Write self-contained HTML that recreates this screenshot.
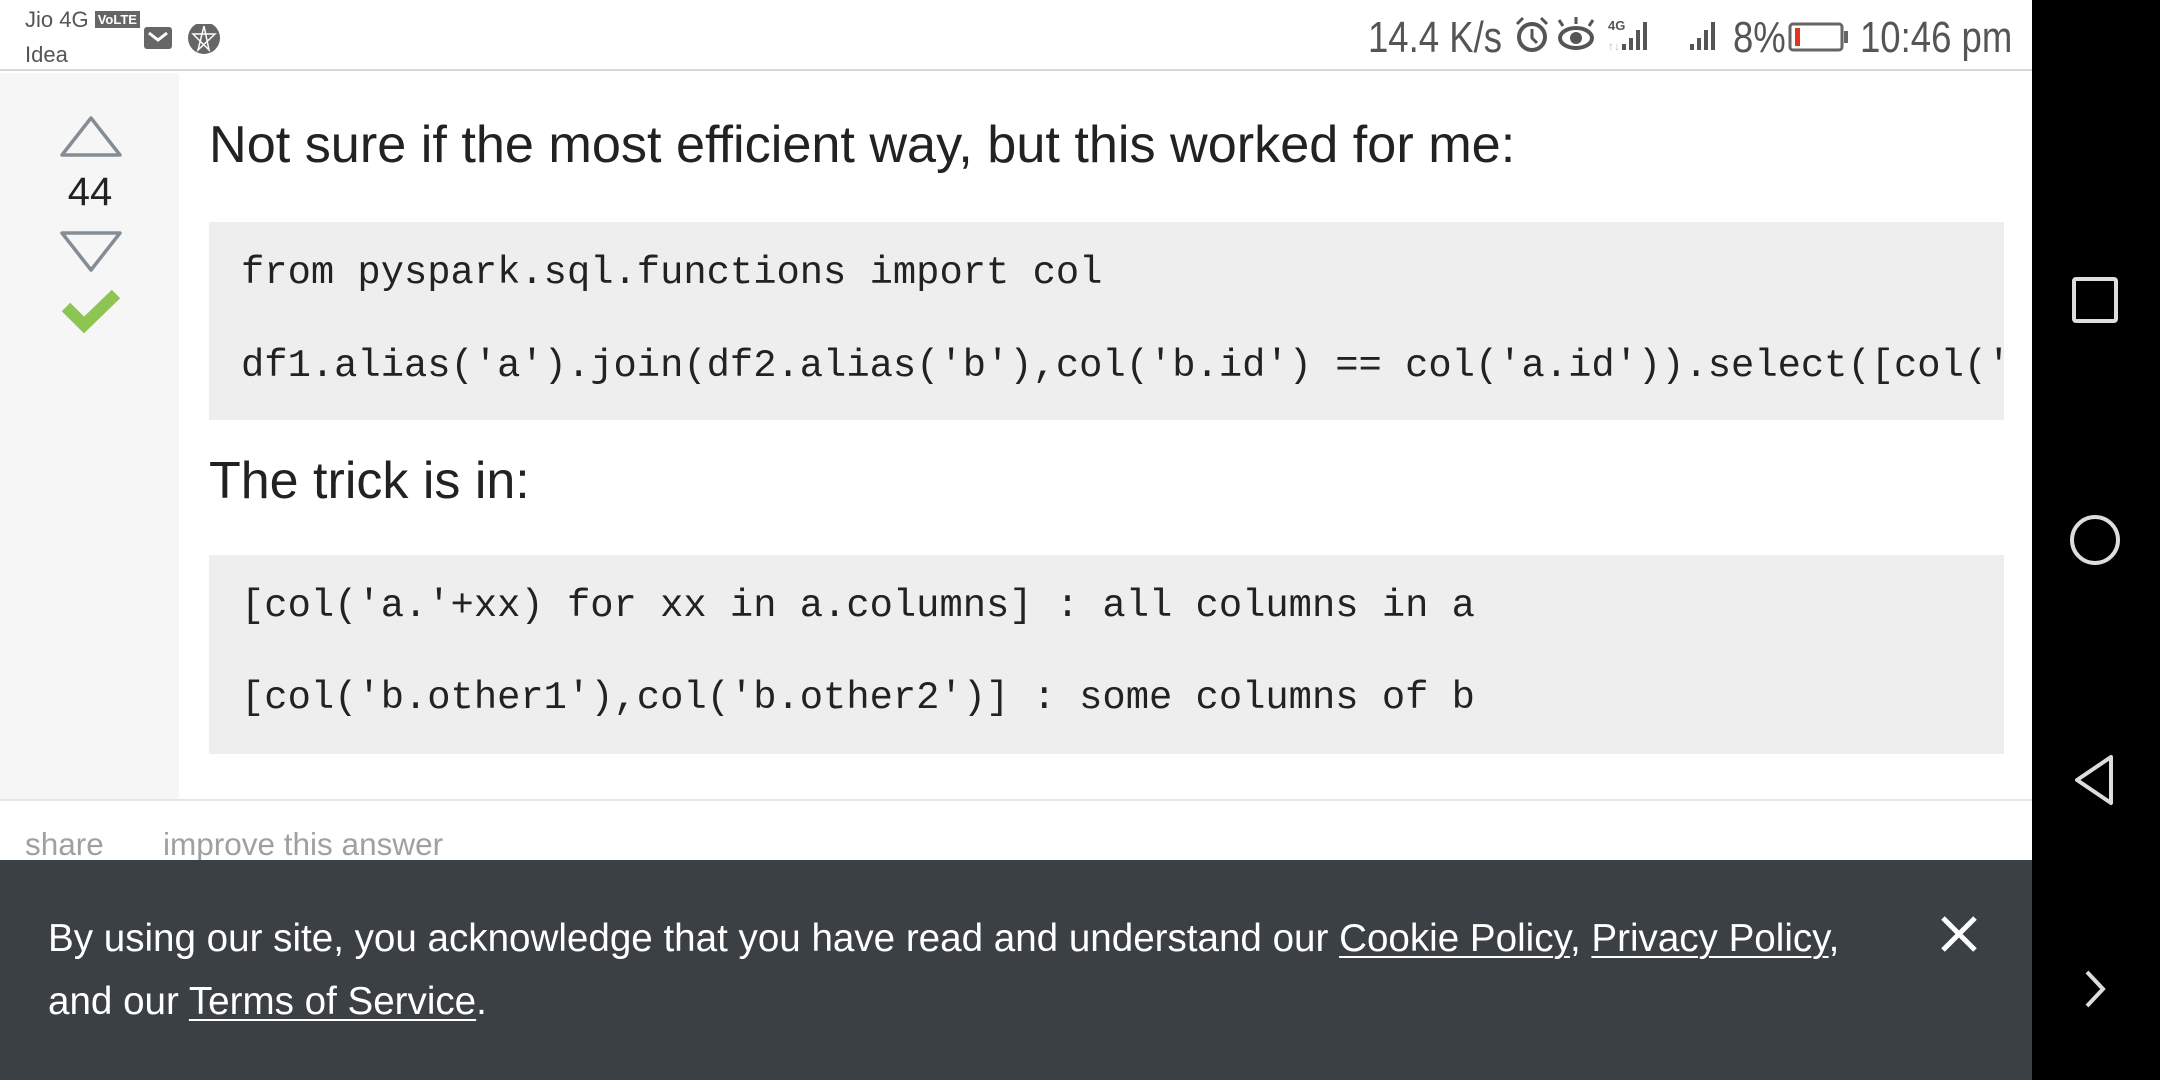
<!DOCTYPE html>
<html><head><meta charset="utf-8"><style>
*{margin:0;padding:0;box-sizing:border-box}
body{width:2160px;height:1080px;position:relative;overflow:hidden;background:#fff;font-family:"Liberation Sans",sans-serif}
.a{position:absolute;white-space:nowrap}
.code{position:absolute;left:209px;width:1795px;background:#eeeeee;overflow:hidden}
.mono{font-family:"Liberation Mono",monospace;font-size:38.8px;color:#222;position:absolute;left:32px;white-space:pre}
.st{color:#555;font-size:44px;transform-origin:left top;transform:scaleX(.83)}
u{text-decoration:underline;text-underline-offset:5px;text-decoration-thickness:2px}
</style></head><body>
<div class="a" style="left:0;top:0;width:2032px;height:71px;border-bottom:2px solid #d8d8d8"></div>
<div class="a" style="left:25px;top:7px;font-size:22px;color:#555">Jio 4G <span style="background:#666;color:#fff;font-size:13px;font-weight:bold;padding:1px 3px;vertical-align:3px">VoLTE</span></div>
<div class="a" style="left:25px;top:42px;font-size:22px;color:#555">Idea</div>
<svg class="a" style="left:143px;top:24px" width="82" height="34"><rect x="1" y="3" width="28" height="22" rx="3" fill="#666"/><path d="M6 9 L15 16 L24 9" stroke="#fff" stroke-width="3" fill="none"/><circle cx="61" cy="14" r="16" fill="#666"/><path d="M61 2 L66 26 L50 10 L72 10 L55 26 Z" stroke="#fff" stroke-width="1.5" fill="none"/></svg>
<div class="a st" style="left:1368px;top:13px">14.4 K/s</div>
<svg class="a" style="left:1513px;top:16px" width="250" height="40">
<circle cx="19" cy="21" r="13" stroke="#555" stroke-width="4" fill="none"/><path d="M19 13v9l5 5" stroke="#555" stroke-width="3" fill="none"/><path d="M4 8l6-6M34 8l-6-6" stroke="#555" stroke-width="3"/>
<ellipse cx="63" cy="22" rx="16" ry="10" stroke="#555" stroke-width="4" fill="none"/><circle cx="63" cy="22" r="6" fill="#555"/><path d="M50 10l-4-6M63 8v-7M76 10l4-6" stroke="#555" stroke-width="3"/>
<text x="95" y="14" font-size="13" font-weight="bold" fill="#555" font-family="Liberation Sans">4G</text><text x="95" y="34" font-size="12" fill="#bbb" font-family="Liberation Sans">↑↓</text>
<rect x="109" y="28" width="4" height="6" fill="#555"/><rect x="116" y="22" width="4" height="12" fill="#555"/><rect x="123" y="14" width="4" height="20" fill="#555"/><rect x="130" y="6" width="4" height="28" fill="#555"/>
<rect x="177" y="28" width="4" height="6" fill="#555"/><rect x="184" y="22" width="4" height="12" fill="#555"/><rect x="191" y="14" width="4" height="20" fill="#555"/><rect x="198" y="6" width="4" height="28" fill="#555"/>
</svg>
<div class="a st" style="left:1733px;top:13px">8%</div>
<svg class="a" style="left:1788px;top:20px" width="62" height="34"><rect x="2" y="4" width="52" height="26" rx="3" stroke="#666" stroke-width="3" fill="none"/><rect x="7" y="8" width="5" height="18" fill="#e53222"/><rect x="56" y="11" width="4" height="12" fill="#666"/></svg>
<div class="a st" style="left:1860px;top:13px">10:46 pm</div>

<div class="a" style="left:2032px;top:0;width:128px;height:1080px;background:#000"></div>
<svg class="a" style="left:2032px;top:0" width="128" height="1080" fill="none" stroke="#ddd" stroke-width="4">
<rect x="42" y="279" width="42" height="42" rx="2"/><circle cx="63" cy="540" r="23"/><path d="M79 757 L45 780 L79 803 Z" stroke-linejoin="round"/><path d="M55 972 L71 989 L55 1006"/></svg>

<div class="a" style="left:0;top:73px;width:179px;height:726px;background:#f6f6f6"></div>
<div class="a" style="left:0;top:799px;width:2032px;height:2px;background:#e6e6e6"></div>
<svg class="a" style="left:58px;top:114px" width="66" height="220" fill="none">
<path d="M4 41 L33 4 L62 41 Z" stroke="#848d95" stroke-width="3.5" stroke-linejoin="round"/>
<path d="M4 119 L62 119 L33 156 Z" stroke="#848d95" stroke-width="3.5" stroke-linejoin="round"/>
<path d="M8 193 L26 211 L58 180" stroke="#8dc552" stroke-width="12"/>
</svg>
<div class="a" style="left:60px;top:170px;width:60px;text-align:center;font-size:40px;color:#222">44</div>

<div class="a" style="left:209px;top:115px;font-size:52.2px;color:#222">Not sure if the most efficient way, but this worked for me:</div>
<div class="code" style="top:222px;height:198px"><div class="mono" style="top:29px">from pyspark.sql.functions import col</div><div class="mono" style="top:122px">df1.alias('a').join(df2.alias('b'),col('b.id') == col('a.id')).select([col('a.'+xx)</div></div>
<div class="a" style="left:209px;top:451px;font-size:52px;color:#222">The trick is in:</div>
<div class="code" style="top:555px;height:199px"><div class="mono" style="top:29px">[col('a.'+xx) for xx in a.columns] : all columns in a</div><div class="mono" style="top:121px">[col('b.other1'),col('b.other2')] : some columns of b</div></div>

<div class="a" style="left:25px;top:826px;font-size:31.5px;color:#a0a0a0">share</div>
<div class="a" style="left:163px;top:826px;font-size:31.5px;color:#a0a0a0">improve this answer</div>

<div class="a" style="left:0;top:860px;width:2032px;height:220px;background:#3b4045"></div>
<div class="a" style="left:48px;top:907px;font-size:38.6px;color:#fff;line-height:63px">By using our site, you acknowledge that you have read and understand our <u>Cookie Policy</u>, <u>Privacy Policy</u>,<br>and our <u>Terms of Service</u>.</div>
<svg class="a" style="left:1940px;top:915px" width="38" height="38"><path d="M3 3L35 35M35 3L3 35" stroke="#fff" stroke-width="5"/></svg>
</body></html>
